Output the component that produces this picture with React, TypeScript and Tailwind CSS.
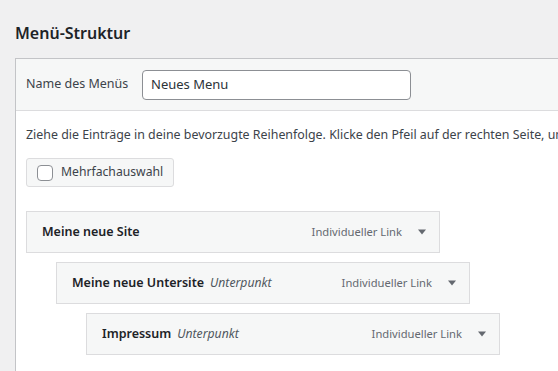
const items = [
  { title: 'Meine neue Site', sub: '', indent: 'ml-0' },
  { title: 'Meine neue Untersite', sub: 'Unterpunkt', indent: 'ml-[30px]' },
  { title: 'Impressum', sub: 'Unterpunkt', indent: 'ml-[60px]' },
];

export default function App() {
  return (
    <div className="w-[558px] h-[371px] overflow-hidden bg-[#f0f0f1] font-['Segoe_UI','Noto_Sans',sans-serif] text-[#3c434a]">
      <div className="pl-[15px] pt-[22px]">
        <h2 className="text-[16px] leading-[22px] font-semibold text-[#1d2327]">Menü-Struktur</h2>
        <div className="mt-[14px] w-[700px] border border-[#c3c4c7] bg-white">
          <div className="h-[52px] flex items-center px-[10px] bg-[#f6f7f7] border-b border-[#dcdcde]">
            <span className="text-[12.5px] w-[116px]">Name des Menüs</span>
            <div className="w-[269px] h-[30px] flex items-center px-[8px] bg-white border border-[#8c8f94] rounded-[4px] text-[13px] text-[#2c3338]">
              Neues Menu
            </div>
          </div>
          <div className="px-[10px] pt-[14px] pb-6">
            <p className="text-[12.4px] leading-[20px] whitespace-nowrap">
              Ziehe die Einträge in deine bevorzugte Reihenfolge. Klicke den Pfeil auf der rechten Seite, um
            </p>
            <div className="mt-[13px] inline-flex items-center gap-[8px] h-[29px] pl-[10px] pr-[10px] bg-[#f6f7f7] border border-[#dcdcde] rounded-[3px]">
              <span className="w-4 h-4 rounded-[4px] border border-[#8c8f94] bg-white"></span>
              <span className="text-[12.2px]">Mehrfachauswahl</span>
            </div>
            <div className="mt-[24px] flex flex-col gap-[9px]">
              {items.map(it => (
                <div key={it.title} className={`${it.indent} w-[414px] h-[42px] flex items-center pl-[15px] pr-[12px] bg-[#f6f7f7] border border-[#dcdcde]`}>
                  <span className="text-[12.5px] font-semibold text-[#1d2327]">{it.title}</span>
                  {it.sub && <span className="ml-[6px] text-[12.2px] italic text-[#50575e]">{it.sub}</span>}
                  <span className="ml-auto text-[11.2px] text-[#646970]">Individueller Link</span>
                  <svg className="ml-[15px]" width="10" height="10" viewBox="0 0 10 10">
                    <path d="M1 2.5h8L5 7.5z" fill="#646970" />
                  </svg>
                </div>
              ))}
            </div>
          </div>
        </div>
      </div>
    </div>
  );
}
